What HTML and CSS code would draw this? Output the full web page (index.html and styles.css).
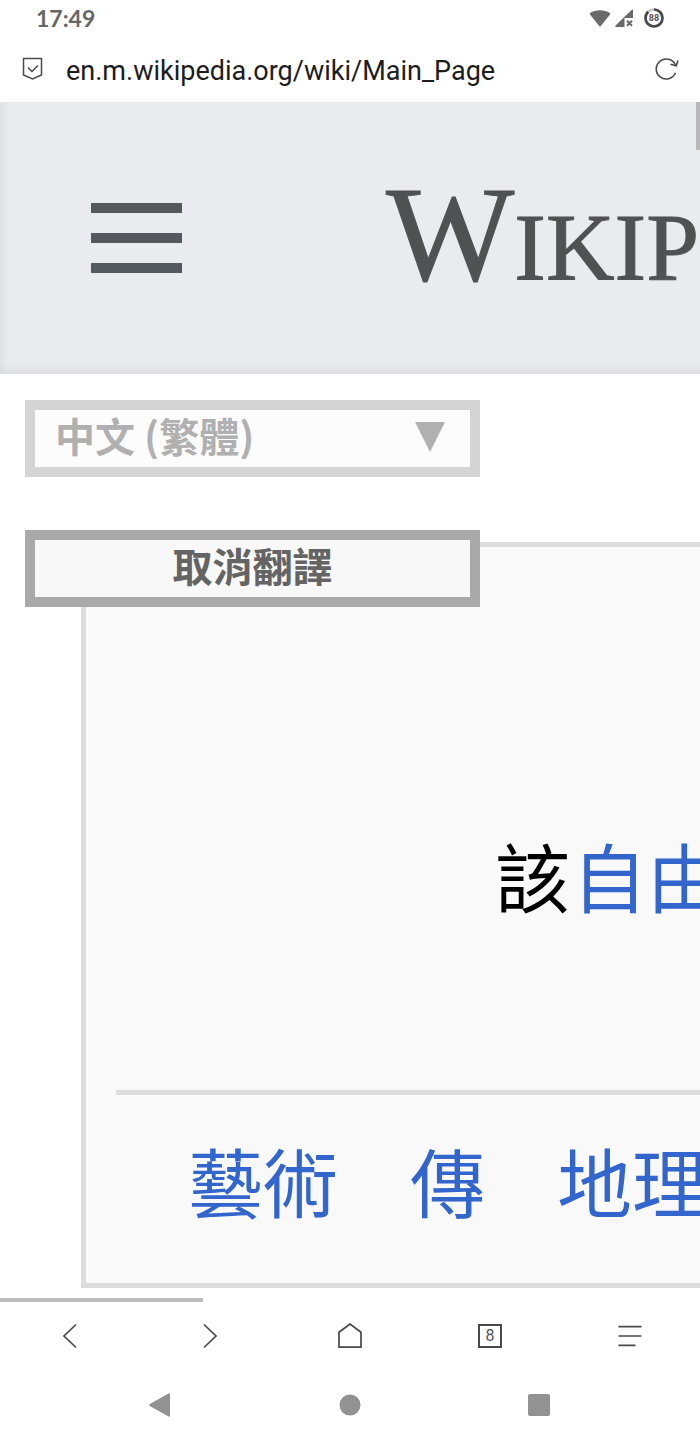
FILE: index.html
```html
<!DOCTYPE html>
<html lang="zh-Hant">
<head>
  <meta charset="UTF-8">
  <meta name="viewport" content="width=device-width, initial-scale=1.0">
  <title>Wikipedia</title>
  <link rel="stylesheet" href="styles.css">
</head>
<body>

  <!-- STATUS BAR -->
  <div class="status-bar">
    <span class="clock">17:49</span>
    <div class="status-icons">
      <svg class="wifi" width="22" height="18" viewBox="0 0 22 18" aria-hidden="true">
        <path d="M1 5.500C.6 5 .7 4.300 1.200 3.900 6.500.2 15.500.2 20.800 3.900c.5.4.6 1.100.2 1.600l-9 11.200c-.5.7-1.500.7-2 0z" fill="#6a6a6a"/>
      </svg>
      <svg class="signal" width="19" height="18" viewBox="0 0 19 18" aria-hidden="true">
        <path d="M18 .5V9H9.500v9H1.500c-1.300 0-1.500-1-.7-1.800L16.500 1z" fill="#6a6a6a"/>
        <path d="M12 11.800l5 5M17 11.800l-5 5" stroke="#6a6a6a" stroke-width="2"/>
      </svg>
      <svg class="battery" width="20" height="20" viewBox="0 0 20 20" aria-hidden="true">
        <circle cx="10" cy="10" r="8.500" fill="none" stroke="#c6c6c6" stroke-width="2.600"/>
        <circle cx="10" cy="10" r="8.500" fill="none" stroke="#484848" stroke-width="2.600" pathLength="100" stroke-dasharray="88 12" transform="rotate(-90 10 10)"/>
        <text x="10" y="13" text-anchor="middle">88</text>
      </svg>
    </div>
  </div>

  <!-- ADDRESS BAR -->
  <form class="address-bar">
    <button type="button" class="icon-btn" aria-label="Site security">
      <svg width="22" height="24" viewBox="0 0 22 24" fill="none" stroke="#4a4a4a" stroke-width="1.500">
        <path d="M1.500 1.500h18v16.500l-9 4-9-4z"/>
        <path d="M6 10.500l4 4 6-6"/>
      </svg>
    </button>
    <input type="text" aria-label="Address" value="en.m.wikipedia.org/wiki/Main_Page">
    <button type="button" class="icon-btn" aria-label="Reload">
      <svg width="24" height="24" viewBox="0 0 24 24" fill="none" stroke="#4a4a4a" stroke-width="1.600">
        <path d="M20.500 15.800A10 10 0 1 1 20.500 8.200"/>
        <path d="M15.500 7.200l5.700 1.600 1.800-5.300"/>
      </svg>
    </button>
  </form>

  <!-- PAGE -->
  <div class="viewport">
    <header class="site-header">
      <button type="button" class="menu-btn" aria-label="Menu">
        <span></span><span></span><span></span>
      </button>
      <a class="wordmark" href="#">Wikipedia</a>
    </header>

    <div class="content">
      <div class="translate">
        <div class="lang">
          <select aria-label="Language" disabled>
            <option>中文 (繁體)</option>
          </select>
          <svg class="lang-arrow" width="30" height="30" viewBox="0 0 30 30" aria-hidden="true">
            <path d="M0 0h30L15 30z" fill="#b0b0b0"/>
          </svg>
        </div>
        <button type="button" class="cancel">取消翻譯</button>
      </div>

      <main class="card">
        <h1>該<a href="#">自由</a></h1>
        <ul class="topics">
          <li><a href="#">藝術</a></li>
          <li><a href="#">傳</a></li>
          <li><a href="#">地理</a></li>
        </ul>
      </main>
    </div>

    <div class="scroll-y"></div>
    <div class="scroll-x"></div>
  </div>

  <!-- BROWSER TOOLBAR -->
  <nav class="toolbar">
    <button type="button" aria-label="Back">
      <svg width="26" height="26" viewBox="0 0 26 26"><path d="M19 1.500L7 13l12 11.500"/></svg>
    </button>
    <button type="button" aria-label="Forward">
      <svg width="26" height="26" viewBox="0 0 26 26"><path d="M7 1.500L19 13 7 24.500"/></svg>
    </button>
    <button type="button" aria-label="Home">
      <svg width="26" height="26" viewBox="0 0 26 26"><path d="M2 24.200V9.200L13 1l11 8.200v15z"/></svg>
    </button>
    <button type="button" aria-label="Tabs">
      <span class="tab-count">8</span>
    </button>
    <button type="button" aria-label="More">
      <svg width="26" height="26" viewBox="0 0 26 26"><path d="M1.500 3.700h23M1.500 13h23M1.500 22.300h17"/></svg>
    </button>
  </nav>

  <!-- SYSTEM NAVIGATION -->
  <nav class="system-nav">
    <button type="button" aria-label="System back">
      <svg width="24" height="24" viewBox="0 0 24 24"><path d="M.8 11Q-.2 12 .8 13L19.500 23.600Q21 24.100 21 22.600V1.400Q21-.1 19.500.4z"/></svg>
    </button>
    <button type="button" aria-label="System home">
      <svg width="24" height="24" viewBox="0 0 24 24"><circle cx="12" cy="12" r="10.500"/></svg>
    </button>
    <button type="button" aria-label="Recent apps">
      <svg width="24" height="24" viewBox="0 0 24 24"><rect x="1" y="1" width="22" height="22" rx="2"/></svg>
    </button>
  </nav>

</body>
</html>
```
FILE: styles.css
```css
/* === GENERAL === */
* { margin: 0; padding: 0; box-sizing: border-box; }
body {
  min-height: 100vh; display: flex; flex-direction: column; background-color: #fff;
  font-family: Roboto, "Noto Sans CJK TC", sans-serif; overflow: hidden;
}
a { color: #36c; text-decoration: none; }
button { border: none; background: none; cursor: pointer; font-family: inherit; }
svg { display: block; }

/* === STATUS BAR === */
.status-bar { display: flex; justify-content: space-between; align-items: center; height: 35px; padding: 0 36px; }
.clock { font-family: Lato, sans-serif; font-size: 23px; font-weight: 700; color: #666; }
.status-icons { display: flex; align-items: center; gap: 4px; }
.battery { margin-left: 6px; }
.battery text { font-family: Roboto, sans-serif; font-size: 9px; font-weight: 700; fill: #555; }

/* === ADDRESS BAR === */
.address-bar { display: flex; align-items: center; height: 67px; padding: 0 20px; }
.icon-btn { display: flex; justify-content: center; width: 26px; }
.address-bar input {
  flex: 1; min-width: 0; padding: 6px 20px 2px; border: none; outline: none; background: none;
  font-family: Roboto, sans-serif; font-size: 27px; color: #1c1c1c;
}

/* === PAGE === */
.viewport { flex: 1; position: relative; overflow: hidden; }
.site-header {
  display: flex; align-items: center; gap: 204px; padding: 0 91px; height: 272px;
  background-color: #eaebef; box-shadow: inset 6px -8px 14px -8px #d0d2d6;
}
.menu-btn { display: flex; flex-direction: column; gap: 20px; flex: none; width: 91px; }
.menu-btn span { height: 10px; background-color: #54595d; }
.wordmark {
  padding-bottom: 8px; font-family: "Liberation Serif", serif; font-size: 136px; line-height: 160px;
  font-variant: small-caps; color: #505153; -webkit-text-stroke: 1px #505153;
}

.content { position: relative; padding: 168px 0 14px 81px; }

/* === TRANSLATE WIDGET === */
.translate { position: absolute; top: 26px; left: 25px; width: 455px; display: grid; gap: 53px; }
.lang { position: relative; }
.lang select, .cancel {
  display: block; width: 100%; height: 77px; padding: 0 20px 8px;
  font-family: "Noto Sans CJK TC", sans-serif; font-size: 40px; font-weight: 700; line-height: 48px;
}
.lang select {
  appearance: none; border: 10px solid #d4d4d4; border-radius: 0;
  background-color: #fcfcfc; color: #b0b0b0; opacity: 1;
}
.lang-arrow { position: absolute; top: 22px; right: 35px; pointer-events: none; }
.cancel { border: 10px solid #a9a9a9; background-color: #f8f8f8; color: #646464; }

/* === MAIN PAGE CARD === */
.card {
  margin-right: -200px; padding: 0 0 48px 30px;
  border: 5px solid #ddd; background-color: #f9f9f9;
  font-family: "Noto Sans CJK TC", sans-serif; font-size: 75px; line-height: 110px;
}
.card h1 {
  padding: 273px 0 160px 379px; border-bottom: 5px solid #ddd;
  font-size: 75px; font-weight: 400; color: #000; white-space: nowrap;
}
.card h1 a { padding: 0 2px; }
.topics { display: flex; gap: 72px; padding: 30px 0 0 72px; list-style: none; white-space: nowrap; }

/* === SCROLL INDICATORS === */
.scroll-y { position: absolute; top: 0; right: 0; width: 4px; height: 48px; background-color: #b8b8b8; }
.scroll-x { position: absolute; bottom: 0; left: 0; width: 29%; height: 4px; background-color: #bdbdbd; }

/* === BROWSER TOOLBAR === */
.toolbar { display: grid; grid-template-columns: repeat(5, 1fr); height: 68px; }
.toolbar button, .system-nav button { display: flex; align-items: center; justify-content: center; }
.toolbar svg { fill: none; stroke: #484848; stroke-width: 1.7; }
.tab-count {
  width: 24px; height: 24px; border: 2px solid #484848;
  font-size: 16px; line-height: 20px; color: #555;
}

/* === SYSTEM NAVIGATION === */
.system-nav { display: grid; grid-template-columns: repeat(3, 1fr); height: 70px; padding: 0 66px; }
.system-nav svg { fill: #929292; }
```
